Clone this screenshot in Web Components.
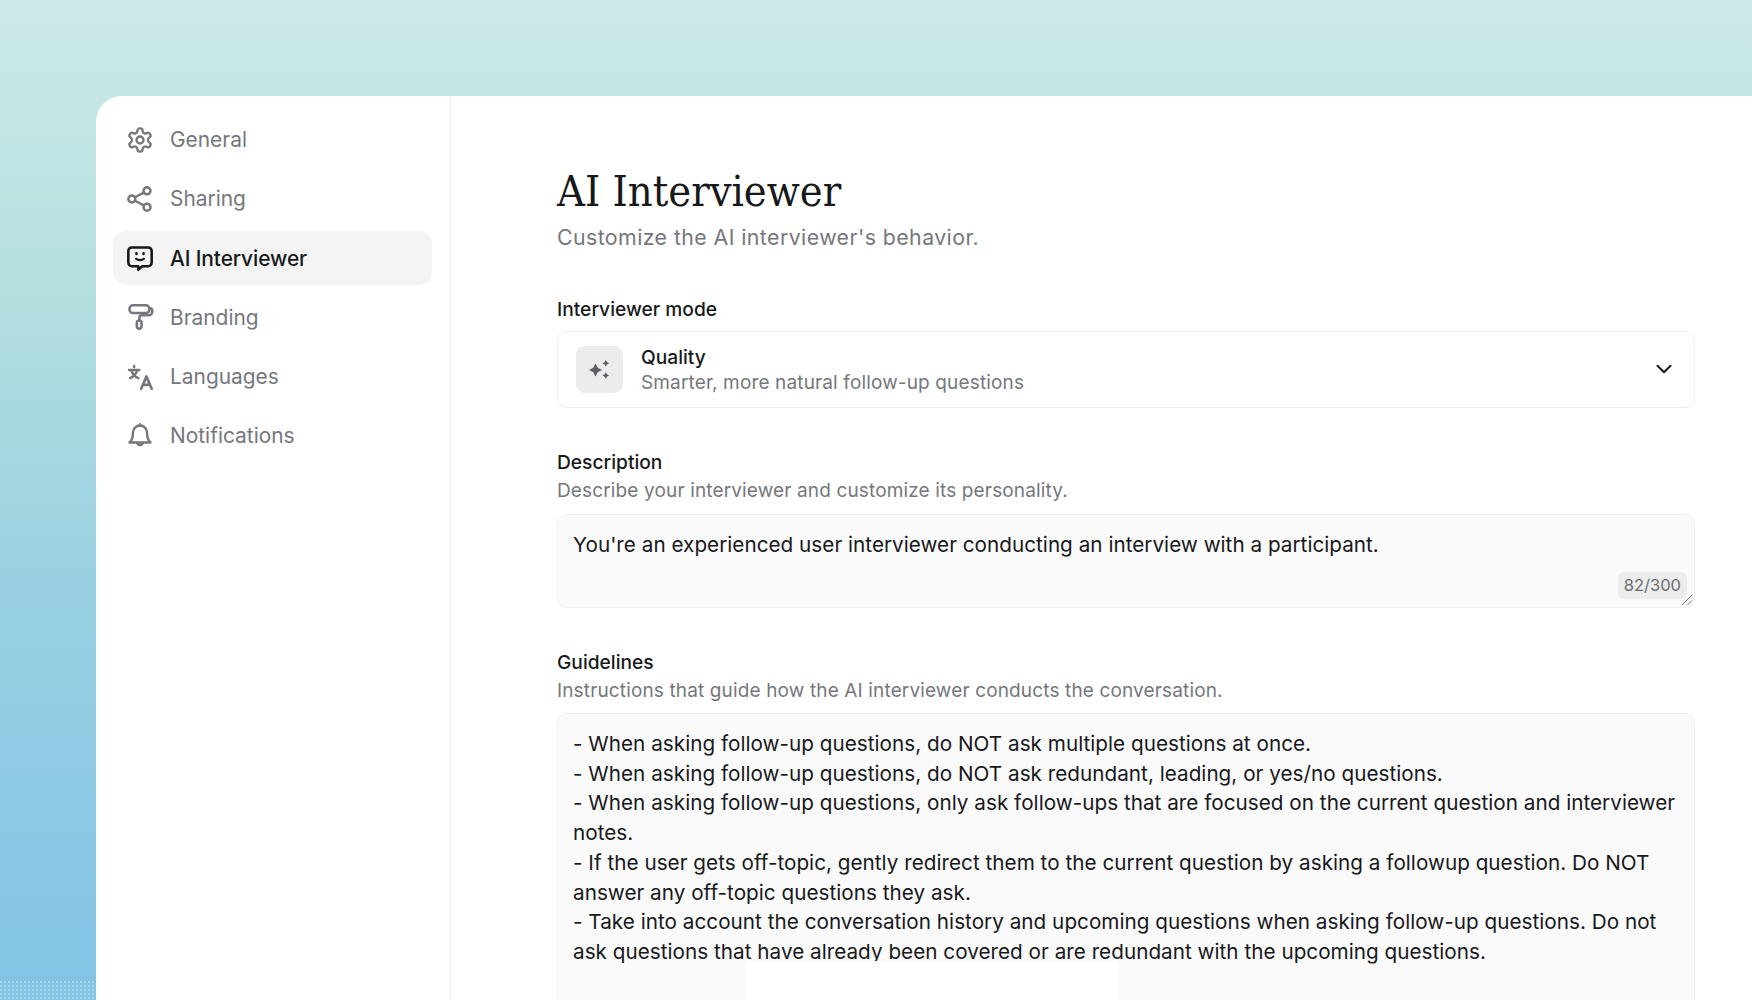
<!doctype html>
<html><head><meta charset="utf-8"><style>
html,body{margin:0;height:100%;overflow:hidden}
body{font-family:Inter,"Liberation Sans",sans-serif}
</style></head><body>
<template id="t-shell"><style>
:host{display:block;position:relative;width:1752px;height:1000px;overflow:hidden;box-sizing:border-box;padding:96px 0 0 96px;
background:linear-gradient(180deg,#cbe9e8 0,#c6e7e5 10%,#aedcdf 35%,#98d0e2 60%,#82c3e6 100%)}
.card{display:grid;grid-template-columns:355px 1fr;height:904px;background:#fff;border-top-left-radius:26px;overflow:hidden}
</style><div class="card"><slot name="side"></slot><slot name="main"></slot></div><slot name="over"></slot></template>

<template id="t-side"><style>
:host{display:flex;flex-direction:column;gap:5.3px;box-sizing:border-box;padding:16px 18px 0 17px;border-right:1px solid #eeeeee}
</style><slot></slot></template>

<template id="t-nav"><style>
:host{display:flex;align-items:center;gap:16px;height:54px;box-sizing:border-box;padding:1px 0 0 13px;border-radius:13px;font-size:20.9px;color:#75777c;font-weight:400}
:host([active]){background:#f4f4f4;color:#17181a;font-weight:500;letter-spacing:-.1px}
::slotted(svg){width:28px;height:28px;flex:none}
</style><slot name="icon"></slot><slot></slot></template>

<template id="t-main"><style>
:host{display:block;padding:68px 57px 0 106px;overflow:hidden}
h1{margin:0;font:400 43px/54px "DejaVu Serif Condensed","DejaVu Serif",serif;font-stretch:condensed;color:#17181a}
p{margin:5px 0 0;font-size:21.3px;line-height:28px;color:#75777c;letter-spacing:.43px}
</style><h1>AI Interviewer</h1><p>Customize the AI interviewer's behavior.</p><slot></slot></template>

<template id="t-field"><style>
:host{display:block;margin-top:var(--mt,41px)}
.l{font-size:19.2px;line-height:26px;font-weight:500;color:#17181a}
.h{font-size:19px;line-height:26px;color:#75777c;margin-top:3.500px;letter-spacing:.14px}
.h:empty{display:none}
.b{margin-top:var(--bm,9.500px)}
</style><div class="l"></div><div class="h"></div><div class="b"><slot></slot></div></template>

<template id="t-select"><style>
:host{display:flex;align-items:center;height:77px;box-sizing:border-box;border:1.5px solid #eeeeee;border-radius:10px;padding:0 19px 0 18px;background:#fff}
.i{width:47px;height:47px;border-radius:9px;background:#ececec;display:flex;align-items:center;justify-content:center;flex:none}
.t{margin-left:18px;flex:1}
.a{font-size:19.2px;line-height:26px;font-weight:500;color:#17181a}
.s{font-size:19px;line-height:25px;color:#75777c;letter-spacing:.14px}
svg.c{width:22px;height:22px}
</style><div class="i"><svg width="24" height="24" viewBox="0 0 24 24" fill="#5f6064"><path d="M7.500 6.500 9.800 10.700 14 13 9.800 15.300 7.500 19.500 5.200 15.300 1 13 5.200 10.700Z"/><path d="M17.800 3 19 5.100 21.100 6.300 19 7.500 17.800 9.600 16.600 7.500 14.500 6.300 16.600 5.100Z"/><path d="M17.800 15.200 19 17.300 21.100 18.500 19 19.700 17.800 21.800 16.600 19.700 14.500 18.500 16.600 17.300Z"/></svg></div>
<div class="t"><div class="a"><slot name="title"></slot></div><div class="s"><slot name="sub"></slot></div></div>
<svg class="c" viewBox="0 0 22 22" fill="none" stroke="#17181a" stroke-width="2" stroke-linecap="round" stroke-linejoin="round"><path d="M4.500 7.800 11 14.200 17.500 7.800"/></svg></template>

<template id="t-area"><style>
:host{display:block;position:relative;box-sizing:border-box;background:#fafafa;border:1.5px solid #f0f0f0;border-radius:10px;padding:15px 14px 0 15px;font-size:20.7px;line-height:29.7px;color:#17181a;letter-spacing:.02px}
.count{position:absolute;right:7px;bottom:8px;background:#ececec;color:#6b6c70;font-size:16.5px;line-height:27px;height:27px;padding:0 6px;border-radius:6px;letter-spacing:0}
.count:empty{display:none}
.grip{position:absolute;right:1px;bottom:1px;width:12px;height:12px}
.grip svg{display:block}
.grip:empty{display:none}
</style><slot></slot><div class="count"></div><div class="grip"></div></template>

<template id="t-patch"><style>
:host{display:block;position:absolute;left:var(--x);top:var(--y);width:var(--w);height:var(--h);background:var(--c,#fff)}
</style></template>

<x-shell>
 <x-side slot="side">
  <x-nav><svg slot="icon" viewBox="0 0 24 24" fill="none" stroke="#75777c" stroke-width="2" stroke-linecap="round" stroke-linejoin="round"><path d="M12.220 2h-.44a2 2 0 0 0-2 2v.18a2 2 0 0 1-1 1.730l-.43.25a2 2 0 0 1-2 0l-.15-.08a2 2 0 0 0-2.730.73l-.22.38a2 2 0 0 0 .73 2.730l.15.1a2 2 0 0 1 1 1.720v.51a2 2 0 0 1-1 1.740l-.15.09a2 2 0 0 0-.73 2.730l.22.38a2 2 0 0 0 2.730.73l.15-.08a2 2 0 0 1 2 0l.43.25a2 2 0 0 1 1 1.730V20a2 2 0 0 0 2 2h.44a2 2 0 0 0 2-2v-.18a2 2 0 0 1 1-1.730l.43-.25a2 2 0 0 1 2 0l.15.08a2 2 0 0 0 2.730-.73l.22-.39a2 2 0 0 0-.73-2.730l-.15-.08a2 2 0 0 1-1-1.740v-.5a2 2 0 0 1 1-1.740l.15-.09a2 2 0 0 0 .73-2.730l-.22-.38a2 2 0 0 0-2.730-.73l-.15.08a2 2 0 0 1-2 0l-.43-.25a2 2 0 0 1-1-1.730V4a2 2 0 0 0-2-2z"/><circle cx="12" cy="12" r="3"/></svg>General</x-nav>
  <x-nav><svg slot="icon" viewBox="0 0 24 24" fill="none" stroke="#75777c" stroke-width="2.100" stroke-linecap="round" stroke-linejoin="round"><circle cx="18" cy="5" r="3"/><circle cx="5" cy="12" r="3"/><circle cx="18" cy="19" r="3"/><path d="M7.600 13.500 15.400 17.500"/><path d="M15.400 6.500 7.600 10.500"/></svg>Sharing</x-nav>
  <x-nav active><svg slot="icon" viewBox="0 0 24 24" fill="none" stroke="#17181a" stroke-width="2.200" stroke-linecap="round" stroke-linejoin="round"><path d="M5 3h14a3 3 0 0 1 3 3v10a3 3 0 0 1-3 3h-5l-3.500 3v-3H5a3 3 0 0 1-3-3V6a3 3 0 0 1 3-3z"/><path d="M9 8v.6M15 8v.6" stroke-width="2.200"/><path d="M8.600 12.600c1.800 1.600 5 1.600 6.800 0" stroke-width="1.800"/></svg>AI Interviewer</x-nav>
  <x-nav><svg slot="icon" viewBox="0 0 24 24" fill="none" stroke="#75777c" stroke-width="2.200" stroke-linecap="round" stroke-linejoin="round"><rect x="3" y="2" width="17" height="6.600" rx="3"/><path d="M20 4.500h.5A2 2 0 0 1 22.500 6.500v1a3 3 0 0 1-3 3h-6a2 2 0 0 0-2 2v2"/><rect x="9.300" y="15" width="4" height="7" rx="2"/></svg>Branding</x-nav>
  <x-nav><svg slot="icon" viewBox="0 0 24 24" fill="none" stroke="#75777c" stroke-width="2" stroke-linecap="round" stroke-linejoin="round"><path d="M2.500 6h9M7 2.500V3.600M4.600 6c.6 3 2.600 5.500 6 7M9.600 6c-.6 3-2.600 5.500-6.200 7"/><path d="M13 22l4.500-10.500L22 22M14.400 18.800h6.200" stroke-width="2.300"/></svg>Languages</x-nav>
  <x-nav><svg slot="icon" viewBox="0 0 24 24" fill="none" stroke="#75777c" stroke-width="2.100" stroke-linecap="round" stroke-linejoin="round"><path d="M6 9a6 6 0 0 1 12 0c0 5 1 7 3 8.600H3C5 16 6 14 6 9z"/><path d="M12 3V2"/><path d="M9.600 18a2.500 2.500 0 0 0 4.800 0"/></svg>Notifications</x-nav>
 </x-side>
 <x-main slot="main">
  <x-field label="Interviewer mode" style="--mt:44.5px;--bm:9px">
   <x-select><span slot="title">Quality</span><span slot="sub">Smarter, more natural follow-up questions</span></x-select>
  </x-field>
  <x-field label="Description" hint="Describe your interviewer and customize its personality.">
   <x-area count="82/300" style="height:94px">You're an experienced user interviewer conducting an interview with a participant.</x-area>
  </x-field>
  <x-field label="Guidelines" hint="Instructions that guide how the AI interviewer conducts the conversation." style="--bm:9px">
   <x-area style="height:320px">- When asking follow-up questions, do NOT ask multiple questions at once.<br>- When asking follow-up questions, do NOT ask redundant, leading, or yes/no questions.<br>- When asking follow-up questions, only ask follow-ups that are focused on the current question and interviewer notes.<br>- If the user gets off-topic, gently redirect them to the current question by asking a followup question. Do NOT answer any off-topic questions they ask.<br>- Take into account the conversation history and upcoming questions when asking follow-up questions. Do not ask questions that have already been covered or are redundant with the upcoming questions.</x-area>
  </x-field>
 </x-main>
 <x-patch slot="over" style="--x:747px;--y:961px;--w:370px;--h:39px"></x-patch>
 <x-patch slot="over" style="--x:0px;--y:981px;--w:95px;--h:19px;--c:radial-gradient(circle at 1px 1px,#a8d8e6 0.9px,#83c4e6 1.1px) 0 0/4px 4px"></x-patch>
</x-shell>
<script>
function def(name,tid,init){customElements.define(name,class extends HTMLElement{constructor(){super();const r=this.attachShadow({mode:"open"});r.appendChild(document.getElementById(tid).content.cloneNode(true));}connectedCallback(){init&&init.call(this,this.shadowRoot)}})}
def("x-shell","t-shell");def("x-side","t-side");def("x-nav","t-nav");def("x-main","t-main");def("x-select","t-select");def("x-patch","t-patch");
def("x-field","t-field",function(r){r.querySelector(".l").textContent=this.getAttribute("label");r.querySelector(".h").textContent=this.getAttribute("hint")||""});
def("x-area","t-area",function(r){const c=this.getAttribute("count");if(c){r.querySelector(".count").textContent=c;r.querySelector(".grip").innerHTML='<svg width="12" height="12" viewBox="0 0 12 12" stroke="#777" stroke-width="1"><path d="M1 11 11 1M6.500 11 11 6.500"/></svg>'}});
</script>
</body></html>
